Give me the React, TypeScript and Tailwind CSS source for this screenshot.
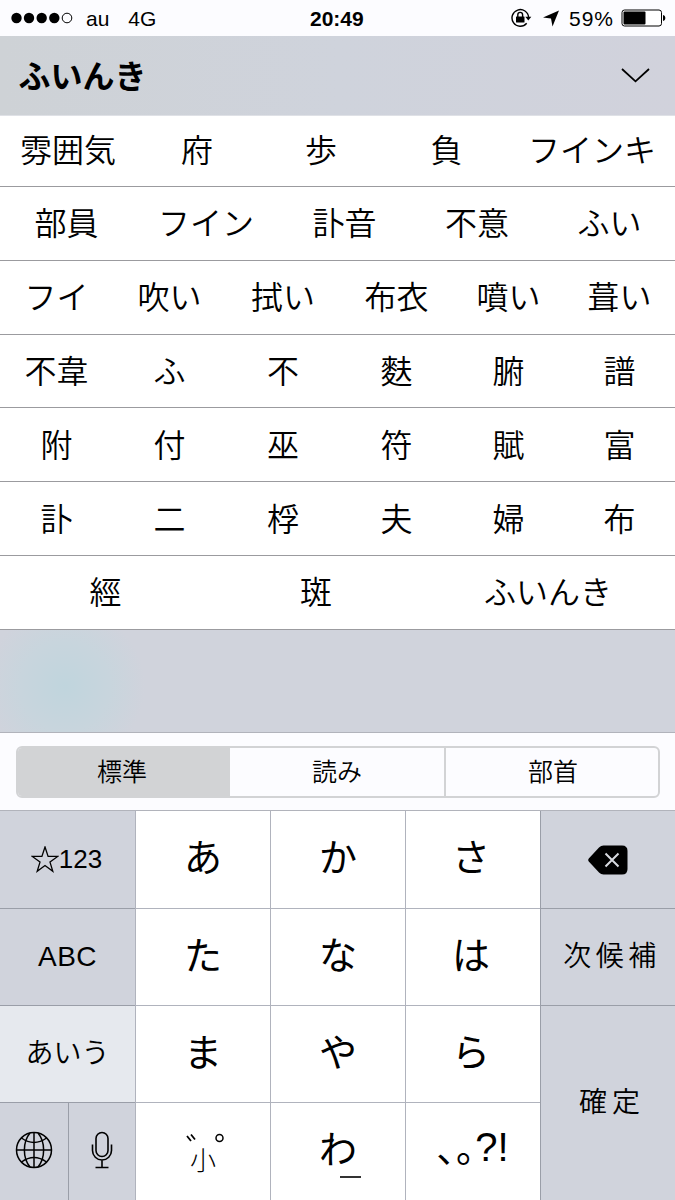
import React from "react";

const rows = [
  { cols: "h-[71px] grid-cols-[136px_122px_126px_125px_166px]", pad: "pb-[7px]", words: ["雰囲気", "府", "歩", "負", "フインキ"] },
  { cols: "h-[74px] grid-cols-[133px_146px_131px_134px_131px]", pad: "pb-[5px]", words: ["部員", "フイン", "訃音", "不意", "ふい"] },
  { cols: "h-[74px] grid-cols-[113px_113px_114px_113px_111px_111px]", pad: "pb-[5px]", words: ["フイ", "吹い", "拭い", "布衣", "噴い", "葺い"] },
  { cols: "h-[73px] grid-cols-[113px_113px_114px_113px_111px_111px]", pad: "pb-1", words: ["不韋", "ふ", "不", "麩", "腑", "譜"] },
  { cols: "h-[74px] grid-cols-[113px_113px_114px_113px_111px_111px]", pad: "pb-1", words: ["附", "付", "巫", "符", "賦", "富"] },
  { cols: "h-[74px] grid-cols-[113px_113px_114px_113px_111px_111px]", pad: "pb-1", words: ["訃", "二", "桴", "夫", "婦", "布"] },
  { cols: "h-[74px] grid-cols-[211px_210px_254px]", pad: "pb-[5px]", words: ["經", "斑", "ふいんき"] },
];

const side = "flex items-center justify-center border-b border-[#9a9ea8] bg-[#d0d3dc]";
const kana = "flex items-center justify-center border-b border-l border-[#b0b3bd] bg-white pb-[9px] text-[38px] leading-none font-normal";

function StatusBar() {
  return (
    <div className="flex h-9 items-center bg-[#fcfcff] font-['Liberation_Sans',sans-serif] text-[21px] leading-none">
      <div className="flex w-[310px] items-center">
        <svg width="74" height="14" viewBox="0 0 74 14">
          <circle cx="16.5" cy="7" r="5.2" />
          <circle cx="29" cy="7" r="5.2" />
          <circle cx="41.7" cy="7" r="5.2" />
          <circle cx="54.3" cy="7" r="5.2" />
          <circle cx="67" cy="7" r="4.8" fill="none" stroke="black" />
        </svg>
        <span className="ml-3">au</span>
        <span className="ml-[19px]">4G</span>
      </div>
      <span className="w-[55px] font-bold">20:49</span>
      <div className="flex flex-1 items-center justify-end pr-[9px]">
        {/* 画面回転ロック */}
        <svg width="22" height="20" viewBox="0 0 22 20" fill="none" stroke="black" strokeWidth="1.4">
          <path d="M16.7 15.2A8.3 8.3 0 1 1 18.6 9.5" />
          <path d="M15.3 8.8h6l-3 3.8z" fill="black" stroke="none" />
          <rect x="6" y="8.5" width="8.5" height="6" rx="0.5" fill="black" stroke="none" />
          <path d="M7.8 9V6.8a2.4 2.4 0 0 1 4.8 0V9" />
        </svg>
        {/* 位置情報 */}
        <svg className="ml-2.5" width="18" height="17" viewBox="0 0 18 17">
          <path d="M17 0.5L10.5 16.5L9 8.5L1 7.5z" />
        </svg>
        <span className="ml-[9px] w-[46px] tracking-[1px]">59%</span>
        <svg className="ml-1.5" width="45" height="18" viewBox="0 0 45 18">
          <rect x="1" y="1" width="39.5" height="16" rx="2.5" fill="white" stroke="black" />
          <rect x="2.5" y="2.5" width="22" height="13" rx="1" />
          <path d="M42 6c1.6.4 2.3 1.5 2.3 3s-.7 2.6-2.3 3z" />
        </svg>
      </div>
    </div>
  );
}

function Candidates() {
  return (
    <div className="bg-white text-[32px] leading-none">
      {rows.map((row, i) => (
        <div key={i} className={`grid border-b border-[#9b9b9f] ${row.cols} ${row.pad}`}>
          {row.words.map((w) => (
            <button key={w} className="flex items-center justify-center whitespace-nowrap">
              {w}
            </button>
          ))}
        </div>
      ))}
    </div>
  );
}

function Segments() {
  return (
    <div className="h-[79px] border-y border-[#b1b3bb] bg-[#fcfcff] px-4 pt-[13px] text-[25px] leading-none">
      <div className="grid h-[52px] w-[644px] grid-cols-[212px_216px_1fr] overflow-hidden rounded-md border-2 border-[#d2d3d5]">
        <button className="bg-[#d2d3d5] pr-1 pb-[3px]">標準</button>
        <button className="border-r-2 border-[#d2d3d5] pb-[3px]">読み</button>
        <button className="pb-[3px] pl-0.5">部首</button>
      </div>
    </div>
  );
}

function Keyboard() {
  return (
    <div className="grid h-[389px] grid-cols-[135px_135px_135px_135px_135px] grid-rows-[98px_97px_97px_97px]">
      <button className={`${side} pr-0.5 font-['Liberation_Sans','Noto_Sans_CJK_JP',sans-serif] text-[26px]`}>
        <svg width="28" height="27" viewBox="0 0 28 27" fill="none" stroke="black" strokeWidth="1.3">
          <path d="M14 1l3.1 9.4h9.6L19 16.1l2.8 9.2L14 19.6l-7.8 5.7 2.8-9.2-7.7-5.7h9.6z" />
        </svg>
        123
      </button>
      <button className={kana}>あ</button>
      <button className={kana}>か</button>
      <button className={`${kana} pr-1`}>さ</button>
      <button className={`${side} border-l`}>
        <svg width="40" height="30" viewBox="0 0 40 30">
          <path d="M0.8 13.5L11 2.4Q13 .5 15.5 .5H34Q39.5 .5 39.5 6V24Q39.5 29.5 34 29.5H15.5Q13 29.5 11 27.6L.8 16.5Q-.4 15 .8 13.5z" />
          <path d="M17.5 8.5l13 13M30.5 8.5l-13 13" stroke="#d8dae0" strokeWidth="2" />
        </svg>
      </button>

      <button className={`${side} font-['Liberation_Sans',sans-serif] text-[28px] tracking-[0.5px]`}>ABC</button>
      <button className={kana}>た</button>
      <button className={kana}>な</button>
      <button className={`${kana} pr-1`}>は</button>
      <button className={`${side} border-l pb-1.5 pl-2 text-[28px] tracking-[4.5px]`}>次候補</button>

      <button className={`${side} bg-[#e6e9ee] pb-1.5 text-[28px]`}>あいう</button>
      <button className={kana}>ま</button>
      <button className={kana}>や</button>
      <button className={`${kana} pr-1`}>ら</button>
      <button className="row-span-2 flex items-center justify-center border-l border-[#9a9ea8] bg-[#d0d3dc] pb-[6px] pl-2 text-[28px] tracking-[5px]">
        確定
      </button>

      <div className="grid grid-cols-[69px_66px] bg-[#d0d3dc]">
        <button className="flex items-center justify-center border-r border-[#9a9ea8] pb-[3px]">
          <svg width="38" height="38" viewBox="0 0 38 38" fill="none" stroke="black" strokeWidth="1.5">
            <circle cx="19" cy="19" r="17.5" />
            <path d="M19 1.5v35M1.5 19h35" />
            <path d="M15 2C7.5 11 7.5 27 15 36M23 2C30.5 11 30.5 27 23 36" />
            <path d="M6.5 7Q19 16 31.5 7M6.5 31Q19 22 31.5 31" />
          </svg>
        </button>
        <button className="flex items-center justify-center pb-[3px]">
          <svg width="22" height="38" viewBox="0 0 22 38" fill="none" stroke="black" strokeWidth="1.6">
            <rect x="5" y="1.5" width="12" height="24" rx="6" />
            <path d="M1.5 13.5v6a9.5 9.5 0 0 0 19 0v-6M11 29v7.5M4.5 36.5h13" />
          </svg>
        </button>
      </div>
      <button className="flex flex-col items-center justify-start border-l border-[#b0b3bd] bg-white pt-[30px] leading-none">
        {/* 濁点・半濁点 */}
        <svg className="ml-1" width="40" height="10" viewBox="0 0 40 10" fill="none" stroke="black" strokeWidth="1.8">
          <path d="M2 3l4 5M6 1.500l4 5" />
          <circle cx="34.500" cy="5" r="3.500" strokeWidth="1.5" />
        </svg>
        <span className="mt-[3px] text-[26px] font-light">小</span>
      </button>
      <button className="relative flex items-center justify-center border-l border-[#b0b3bd] bg-white pb-[9px] text-[38px] leading-none font-normal">
        わ
        <span className="absolute top-[73px] left-[69px] h-0.5 w-[21px] bg-[#333]" />
      </button>
      <button className="flex items-center justify-center border-l border-[#b0b3bd] bg-white pb-2 text-[38px] leading-none font-normal">
        <span className="-mt-1">､｡</span>
        <span className="pb-0.5 font-['Liberation_Sans',sans-serif] text-[40px]">?!</span>
      </button>
    </div>
  );
}

export default function App() {
  return (
    <div lang="ja" className="h-[1200px] w-[675px] overflow-hidden bg-white font-['Noto_Sans_CJK_JP',sans-serif] font-[350] text-black">
      <StatusBar />
      <div className="flex h-20 items-center justify-between border-b border-[#dfe1e6] bg-linear-to-r from-[#ced2d6] via-[#cfd3dc] to-[#d1d2dc] pr-[25px] pl-[18.5px]">
        <span className="pb-[3px] text-[32px] leading-none font-bold">ふいんき</span>
        <svg width="29" height="15" viewBox="0 0 29 15" fill="none" stroke="black" strokeWidth="1.8">
          <path d="M1 1l13.5 12.3L28 1" />
        </svg>
      </div>
      <Candidates />
      <div className="h-[102px] bg-[#d0d3dc] bg-[radial-gradient(circle_at_65px_56px,#c0d5dd_0,#c8d5dd_45px,#d0d3dc_80px)]" />
      <Segments />
      <Keyboard />
    </div>
  );
}
